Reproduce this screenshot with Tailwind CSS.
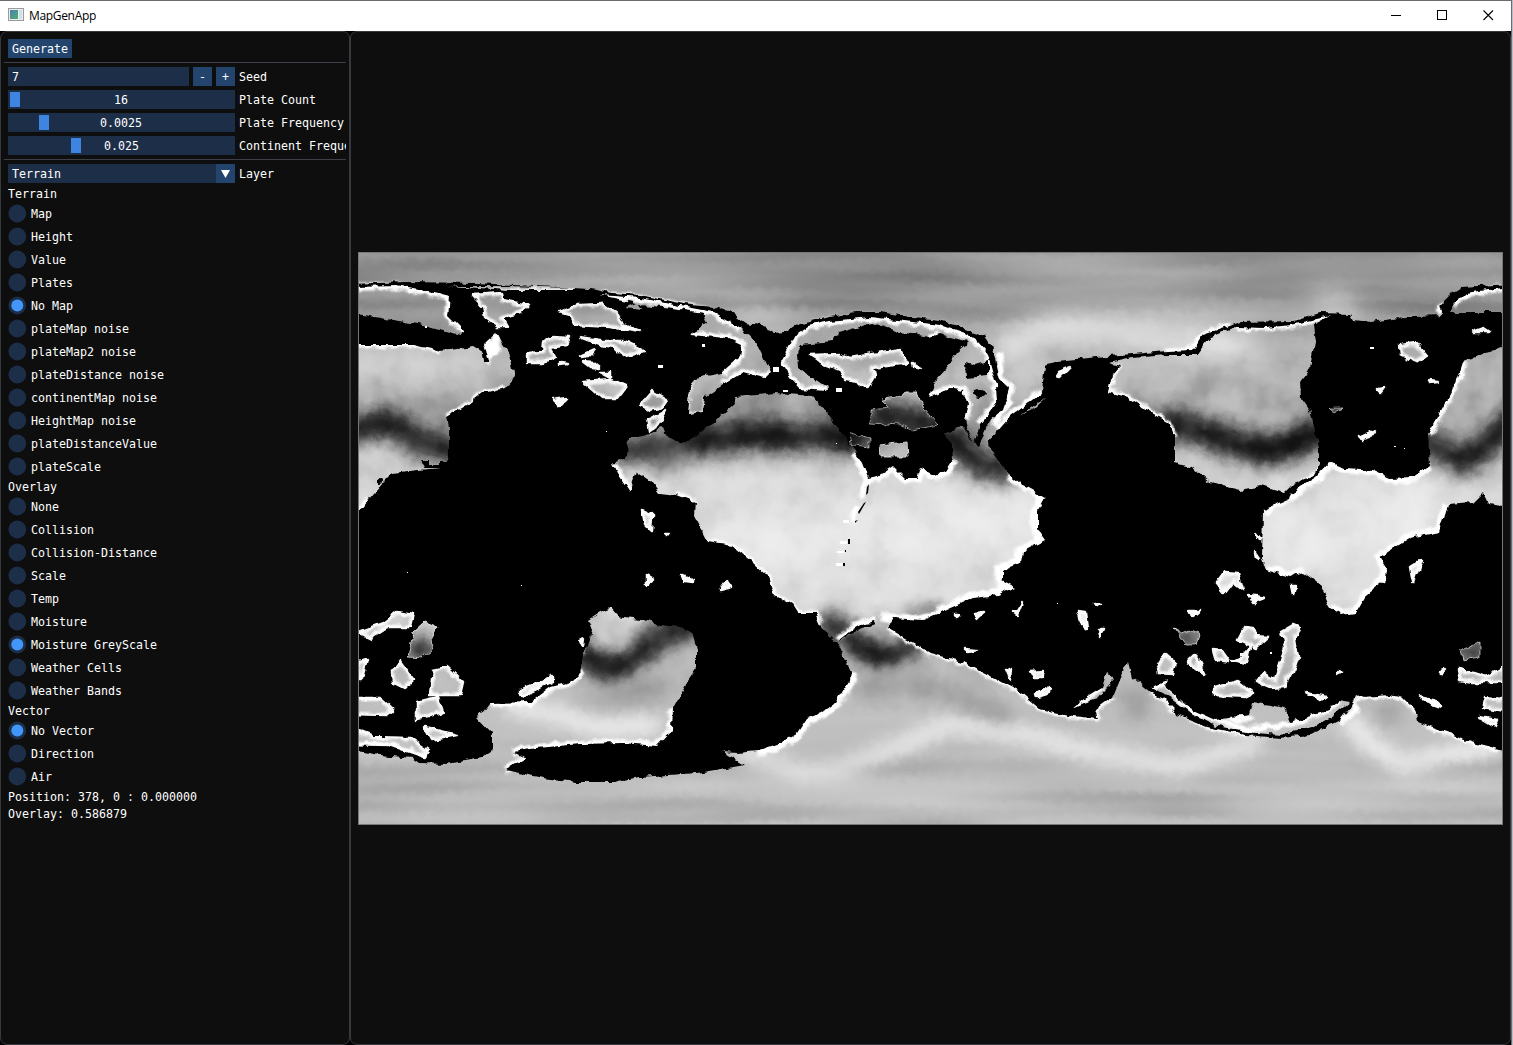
<!DOCTYPE html>
<html lang="en">
<head>
<meta charset="utf-8">
<title>MapGenApp</title>
<script src="https://cdn.jsdelivr.net/npm/@tailwindcss/browser@4"></script>
</head>
<body class="w-[1513px] h-[1045px] overflow-hidden bg-[#b9bcc4] font-['Open_Sans',sans-serif]">
<div class="flex flex-col w-[1512px] h-[1045px] border-t border-r border-[#6b6b6f] bg-black">
  <header class="flex h-[30px] shrink-0 items-center bg-white pb-px pl-2 text-black">
    <svg class="size-4 shrink-0" viewBox="0 0 16 16"><defs><linearGradient id="ico" x2="1" y2="1"><stop stop-color="#4a7fb5"/><stop offset="1" stop-color="#4fb06a"/></linearGradient></defs><rect x=".5" y=".5" width="15" height="12" fill="#eceff1" stroke="#9a9a9a"/><rect x="2" y="2" width="8" height="9" fill="url(#ico)"/><rect x="11" y="2" width="3" height="9" fill="#cfe0e4"/></svg>
    <span class="ml-[5px] pt-px text-[12px] leading-4 tracking-[-0.33px]">MapGenApp</span>
    <div class="ml-auto flex items-center gap-[35px] pr-[17px]">
      <svg class="size-[11px]" viewBox="0 0 11 11" shape-rendering="crispEdges"><path d="M0 5.500H10" stroke="#000"/></svg>
      <svg class="size-[11px]" viewBox="0 0 11 11" shape-rendering="crispEdges"><path d="M.5 .5H9.500V9.500H.5Z" fill="none" stroke="#000"/></svg>
      <svg class="size-[11px]" viewBox="0 0 11 11"><path d="M.5 .5L10 10M10 .5L.5 10" stroke="#000" stroke-width="1.100"/></svg>
    </div>
  </header>
  <main class="flex min-h-0 flex-1 text-[11.63px] leading-[13px] font-['DejaVu_Sans_Mono',monospace] text-white">
    <aside class="flex w-[350px] shrink-0 flex-col gap-1 overflow-hidden rounded-[7px] border border-[#38383f] bg-[#0e0e0e] px-[3px] pt-[7px] whitespace-pre">
      <button class="ml-1 h-[19px] w-16 shrink-0 bg-[#23456d] pt-[2px] text-center">Generate</button>
      <div class="h-px shrink-0 bg-[#3f3f48]"></div>
      <div class="ml-1 flex h-[19px] shrink-0 items-center gap-1 overflow-hidden">
        <div class="flex h-full w-[181px] items-center bg-[#1d2e48] pt-[2px] pl-1">7</div>
        <button class="h-full w-[19px] bg-[#23456d] pt-[2px]">-</button>
        <button class="h-full w-[19px] bg-[#23456d] pt-[2px]">+</button>
        <span class="pt-[2px]">Seed</span>
      </div>
      <div class="ml-1 flex h-[19px] shrink-0 items-center gap-1 overflow-hidden">
        <div class="relative h-full w-[227px] shrink-0 bg-[#1d2e48] pr-px text-center leading-[21px]"><i class="absolute top-[2px] left-[2px] h-[15px] w-[10px] bg-[#3d85e0]"></i>16</div><span class="pt-[2px]">Plate Count</span>
      </div>
      <div class="ml-1 flex h-[19px] shrink-0 items-center gap-1 overflow-hidden">
        <div class="relative h-full w-[227px] shrink-0 bg-[#1d2e48] pr-px text-center leading-[21px]"><i class="absolute top-[2px] left-[31px] h-[15px] w-[10px] bg-[#3d85e0]"></i>0.0025</div><span class="pt-[2px]">Plate Frequency</span>
      </div>
      <div class="ml-1 flex h-[19px] shrink-0 items-center gap-1 overflow-hidden">
        <div class="relative h-full w-[227px] shrink-0 bg-[#1d2e48] text-center leading-[21px]"><i class="absolute top-[2px] left-[63px] h-[15px] w-[10px] bg-[#3d85e0]"></i>0.025</div><span class="pt-[2px]">Continent Frequency</span>
      </div>
      <div class="h-px shrink-0 bg-[#3f3f48]"></div>
      <div class="ml-1 flex h-[19px] shrink-0 items-center gap-1">
        <div class="flex h-full w-[227px] items-center justify-between bg-[#1d2e48] pl-1"><span class="pt-[2px]">Terrain</span><span class="flex size-[19px] items-center justify-center bg-[#23456d]"><svg class="h-2 w-[9px]" viewBox="0 0 9 8"><path d="M0 0H9L4.500 8Z" fill="#fff"/></svg></span></div><span class="pt-[2px]">Layer</span>
      </div>
      <div id="options" class="ml-1 flex flex-col gap-1"></div>
    </aside>
    <section class="flex min-w-0 flex-1 items-center rounded-[7px] border border-[#38383f] bg-[#0e0e0e] pl-[7px]">
<svg class="mt-px h-[573px] w-[1145px] shrink-0 bg-[#777]" viewBox="358 252 1145 573">
<defs>
<filter id="rough" x="0" y="0" width="1" height="1" color-interpolation-filters="sRGB"><feTurbulence type="fractalNoise" baseFrequency=".11" numOctaves="2" seed="7"/><feDisplacementMap in="SourceGraphic" scale="7" xChannelSelector="R" yChannelSelector="G"/></filter>
<filter id="b2" x="-.2" y="-.2" width="1.400" height="1.400"><feGaussianBlur stdDeviation="1.100"/></filter>
<filter id="b8" filterUnits="userSpaceOnUse" x="320" y="220" width="1220" height="640"><feGaussianBlur stdDeviation="8"/></filter>
<filter id="b16" filterUnits="userSpaceOnUse" x="300" y="200" width="1260" height="680"><feGaussianBlur stdDeviation="13"/></filter>
<filter id="cloud" x="0" y="0" width="1" height="1" color-interpolation-filters="sRGB"><feTurbulence type="fractalNoise" baseFrequency=".028" numOctaves="3" seed="3"/><feColorMatrix values="2 0 0 0 -.5 2 0 0 0 -.5 2 0 0 0 -.5 0 0 0 0 1"/></filter>
<filter id="streak" x="0" y="0" width="1" height="1" color-interpolation-filters="sRGB"><feTurbulence type="fractalNoise" baseFrequency=".004 .04" numOctaves="2" seed="5"/><feColorMatrix values="1.600 0 0 0 -.3 1.600 0 0 0 -.3 1.600 0 0 0 -.3 0 0 0 0 1"/></filter>
<linearGradient id="midfade" x2="0" y2="1"><stop offset=".1" stop-color="#000"/><stop offset=".25" stop-color="#fff"/><stop offset=".68" stop-color="#fff"/><stop offset=".82" stop-color="#000"/></linearGradient>
<linearGradient id="polefade" x2="0" y2="1"><stop offset=".1" stop-color="#fff"/><stop offset=".22" stop-color="#000"/><stop offset=".75" stop-color="#000"/><stop offset=".93" stop-color="#fff"/></linearGradient>
<mask id="mid" maskUnits="userSpaceOnUse" x="350" y="245" width="1160" height="590"><rect x="350" y="245" width="1160" height="590" fill="url(#midfade)"/></mask>
<mask id="poles" maskUnits="userSpaceOnUse" x="350" y="245" width="1160" height="590"><rect x="350" y="245" width="1160" height="590" fill="url(#polefade)"/></mask>
<linearGradient id="base" x2="0" y2="1"><stop stop-color="#929292"/><stop offset=".1" stop-color="#9c9c9c"/><stop offset=".22" stop-color="#bcbcbc"/><stop offset=".3" stop-color="#aaa"/><stop offset=".4" stop-color="#d8d8d8"/><stop offset=".6" stop-color="#dedede"/><stop offset=".7" stop-color="#b6b6b6"/><stop offset=".8" stop-color="#c2c2c2"/><stop offset=".9" stop-color="#bababa"/><stop offset="1" stop-color="#c0c0c0"/></linearGradient>
<path id="ocean" d="M350 284L405 282 477 283 535 286 590 289 612 293 640 295 665 300 690 305 716 307 730 312 745 323 762 325 775 333 786 332 800 323 815 320 835 316 862 312 880 312 905 316 940 320 955 325 965 329 985 336 991 345 994 355 998 372 1000 380 1009 388 1006 398 1002 410 990 420 984 435 978 446 973 443 962 425 944 433 952 445 953 460 946 471 935 475 920 468 917 478 905 478 893 466 878 476 868 478 862 463 855 452 848 440 840 430 828 415 820 405 812 396 775 393 736 397 733 405 712 423 705 427 703 432 693 438 680 443 667 437 663 427 652 433 640 437 628 437 627 458 613 463 618 473 630 491 637 472 653 483 660 493 677 495 695 502 694 515 708 542 732 546 750 560 768 577 774 595 792 605 797 613 815 613 820 625 830 637 837 643 851 672 850 680 835 703 823 712 807 718 797 733 783 742 757 751 737 753 722 752 744 765 697 773 640 777 613 782 577 782 543 778 505 770 525 758 513 752 537 748 580 744 623 743 657 746 672 730 673 708 688 680 697 667 697 650 692 633 680 627 660 625 640 619 617 616 610 608 600 612 588 620 592 630 588 647 583 653 582 670 570 682 550 687 530 702 490 703 478 718 492 733 492 750 482 758 447 764 420 763 413 758 380 755 350 750 350 511 360 510 368 500 383 483 393 473 417 470 443 468 449 455 449 427 447 417 467 405 483 393 505 388 515 377 510 355 502 342 497 332 485 343 490 362 484 362 483 353 473 347 440 351 413 345 350 345Z
M993 453L988 445 997 432 1010 417 1042 392 1045 365 1057 361 1087 358 1107 356 1133 354 1167 351 1193 350 1203 335 1230 326 1240 322 1293 321 1320 313 1350 314 1353 320 1370 322 1413 316 1443 315 1440 305 1450 295 1463 287 1510 284 1510 343 1463 362 1458 378 1443 408 1428 435 1430 465 1413 477 1390 478 1373 470 1346 468 1330 462 1316 477 1290 493 1288 500 1263 510 1262 560 1266 570 1290 577 1303 572 1320 585 1330 608 1341 615 1356 613 1368 593 1385 580 1386 567 1380 557 1410 538 1440 532 1448 505 1473 503 1483 493 1488 503 1510 506 1510 750 1500 749 1476 743 1453 735 1430 727 1418 722 1415 710 1403 698 1390 695 1363 697 1356 694 1351 706 1340 720 1310 735 1280 738 1246 735 1207 727 1177 715 1175 710 1163 698 1150 692 1132 677 1128 662 1120 680 1113 697 1095 710 1098 719 1073 716 1040 709 1020 692 963 662 930 653 887 628 893 618 923 620 973 598 997 595 1015 587 1002 580 1002 570 1020 563 1022 552 1045 540 1038 530 1038 510 1045 497 1020 483 1008 473 997 458Z
M838 641L850 631 862 624 874 621 876 624 862 628 850 634 841 640Z"/>
<path id="plates" d="M350 287L397 286 425 291 450 297 448 315 465 332 460 336 423 325 350 313Z M447 286L510 286 572 288 572 290 510 290 480 288Z M640 298L670 304 713 312 740 328 755 342 763 358 770 373 765 378 743 372 723 385 705 397 703 413 688 415 690 388 695 378 722 373 740 357 742 345 727 338 690 335 708 323 703 313 673 308 640 305 643 310 625 308 637 303 600 295Z
M780 362L787 350 795 335 808 326 830 321 870 317 905 321 940 325 965 334 978 342 987 352 992 370 996 385 997 400 990 412 980 425 974 444 966 428 964 420 968 405 963 390 952 388 930 396 936 380 947 368 957 352 968 342 940 334 930 337 900 332 873 323 837 333 833 342 800 345 797 355 798 368 813 378 828 388 826 391 800 389 790 378Z
M1110 363L1133 358 1167 355 1197 355 1210 337 1236 327 1265 328 1290 325 1330 316 1313 325 1315 342 1310 368 1300 382 1301 398 1311 412 1315 432 1319 448 1319 465 1313 476 1293 484 1284 493 1262 486 1240 490 1210 483 1193 468 1175 463 1175 438 1168 422 1143 408 1127 397 1108 392 1112 375 1120 366Z M1510 287L1465 293 1453 305 1449 312 1510 312Z
M1152 687L1167 680 1165 687 1193 710 1215 720 1250 715 1253 702 1285 708 1291 722 1330 710 1338 700 1350 702 1333 716 1313 727 1280 735 1246 732 1213 725 1193 715 1170 697Z M1073 707L1084 698 1102 687 1107 672 1115 678 1097 698 1084 702Z M1020 416L1034 406 1047 397 1034 409Z"/>
<path id="isles" d="M472 295L502 293 503 300 528 305 520 313 502 317 508 327 498 327 485 317 483 307Z M560 312L577 305 603 304 618 315 623 325 640 332 610 327 575 325 570 315Z M543 342L553 337 570 338 567 345 550 348 555 357 543 363 527 363 527 353 542 352Z M580 337L600 340 623 340 645 351 623 357 613 347 600 345Z M583 361L593 362 600 368 591 367Z M580 357L595 350 589 356Z M600 373L609 373 609 378Z M583 382L610 380 627 385 617 398 602 398Z M553 400L567 398 559 406Z M560 362L568 363 560 364Z M640 405L652 391 668 400 663 407 650 410Z M648 420L667 411 658 425 650 431Z
M810 355L840 354 850 358 867 355 900 349 908 363 873 368 875 375 867 388 858 382 845 380 840 370 823 363Z M913 363L922 368 914 366Z M1400 345L1416 343 1426 355 1416 362 1401 355Z M1473 332L1484 328 1490 332Z M1360 437L1375 430 1369 438 1362 440Z M1378 389L1384 388 1381 392Z M1429 381L1438 382 1430 383Z M1058 372L1070 367 1060 377Z
M358 632L383 623 397 612 413 615 410 627 387 627 370 638Z M392 672L400 662 413 680 405 688 393 682Z M433 670L447 667 463 682 460 695 430 695Z M417 702L438 697 443 712 417 719Z M350 698L380 698 393 710 387 715 350 714Z M350 728L373 737 410 738 428 750 425 757 390 745 350 744Z M425 727L457 735 432 740Z M520 690L553 677 553 681 522 696Z M358 662L367 660 362 678 358 678Z M580 640L584 638 583 647Z
M642 510L653 515 652 532 645 525Z M665 533L670 533 667 535Z M647 575L654 579 647 584Z M682 575L693 580 693 583 685 582Z M720 590L727 580 732 587Z M1013 612L1018 611 1023 603 1018 616Z M975 614L983 613 978 617Z M955 614L960 614 957 617Z M966 649L978 650 970 652Z M1078 612L1085 613 1087 628 1082 624Z M1099 630L1104 630 1100 636Z M1095 603L1100 604 1097 606Z M1006 668L1012 670 1011 680Z M1030 672L1043 671 1041 677 1033 677Z M1033 695L1050 686 1049 693 1036 697Z
M1217 583L1225 572 1238 573 1243 590 1233 582 1225 593Z M1250 595L1264 598 1254 602Z M1291 585L1295 585 1293 595Z M1188 611L1200 611 1194 616Z M1156 668L1165 653 1175 662 1172 674 1157 673Z M1187 662L1195 654 1203 670 1205 674Z M1238 640L1245 627 1253 628 1256 636 1268 637 1256 648Z M1233 660L1243 655 1250 647 1246 663Z M1213 650L1222 651 1230 662 1216 660Z M1281 632L1293 625 1300 628 1295 640 1298 657 1293 672 1285 687 1270 688 1256 682 1263 673 1275 680 1281 662 1285 647Z M1215 688L1238 681 1253 693 1245 697 1215 695Z M1306 693L1328 697 1320 700Z M1230 718L1253 717 1238 722Z M1256 533L1261 539 1258 537Z M1255 553L1259 559 1256 557Z
M1410 567L1421 560 1413 583Z M1458 670L1470 672 1486 677 1502 668 1510 682 1473 682 1460 680Z M1486 697L1510 700 1510 713 1483 708Z M1478 717L1498 720 1495 727Z M1420 697L1434 700 1441 707 1430 703Z M1439 671L1445 670 1441 673Z M1338 672L1342 673 1338 675Z"/>
<path id="darkisles" d="M882 400L895 398 907 392 917 392 923 408 938 425 913 430 900 425 870 423 870 410 890 408Z M879 445L907 442 908 457 880 457Z M848 432L870 438 870 448 852 446Z M1328 408L1343 408 1334 413Z M413 633L425 622 437 627 430 640 432 650 423 658 408 657 410 647Z M1173 628L1182 633 1190 630 1200 635 1197 645 1185 645Z M1461 650L1480 642 1480 657 1463 660Z"/>
<mask id="land" maskUnits="userSpaceOnUse" x="350" y="245" width="1160" height="590"><rect x="350" y="245" width="1160" height="590" fill="#fff"/><use href="#ocean"/><use href="#plates" fill="#fff"/><use href="#isles" fill="#fff" stroke="#fff" stroke-width="2.500" stroke-linejoin="round"/><use href="#darkisles" fill="#fff" stroke="#fff"/><path d="M966 362L975 365 988 361V376L967 378Z"/><ellipse cx="980" cy="394" rx="7" ry="4"/><circle cx="379" cy="481" r="3"/><path d="M420 461h10v4h8v-3h8v6h-22Z"/></mask>
<clipPath id="frame"><rect x="359" y="253" width="1143" height="571"/></clipPath>
</defs>
<g clip-path="url(#frame)">
<rect x="358" y="252" width="1145" height="574" fill="#000"/>
<g filter="url(#rough)"><g mask="url(#land)">
<rect x="350" y="245" width="1160" height="590" fill="url(#base)"/>
<g filter="url(#b16)" fill="none" stroke-linecap="round">
<path d="M350 298L450 318" stroke="#8e8e8e" stroke-width="25"/>
<path d="M345 365L480 360" stroke="#d4d4d4" stroke-width="28"/>
<path d="M360 395L490 385" stroke="#aaa" stroke-width="20"/>
<path d="M1010 345L1060 327 1180 340 1240 345" stroke="#e8e8e8" stroke-width="32"/>
<path d="M1320 300L1350 306" stroke="#eee" stroke-width="16"/>
<path d="M740 320L780 322" stroke="#ddd" stroke-width="14"/>
<path d="M690 405L810 405" stroke="#929292" stroke-width="18"/>
<path d="M1130 385L1300 385M1450 385L1500 385" stroke="#ababab" stroke-width="26"/>
<path d="M720 545L1020 520M1290 540L1430 510" stroke="#e8e8e8" stroke-width="60"/>
</g>
<g filter="url(#b8)" fill="none" stroke="#161616" stroke-width="26" stroke-linejoin="round">
<path d="M340 428L375 423 395 427 420 442 470 456"/>
<path d="M610 452L650 446 680 448" stroke="#333"/><path d="M675 448L715 438 740 436 780 435 840 438 870 435" stroke-width="29"/><path d="M650 465L690 452" stroke="#666" stroke-width="18"/>
<path d="M870 415L935 424 965 450 985 468 1015 470"/>
<path d="M1160 422L1200 430 1235 445 1275 450 1325 432" stroke-width="29"/><path d="M1415 438L1440 450 1465 460 1485 446 1520 412"/>
<path d="M575 650L592 658 612 674 638 653 662 633 700 624"/>
<path d="M820 626L840 630 856 646 882 658 905 645 915 632" stroke-width="24"/>
<path d="M910 613L945 611" stroke-width="7"/><path d="M1175 638H1200M410 650H435M1455 652H1487M1325 410H1345" stroke-width="16"/>
</g>
<g filter="url(#b8)" fill="none" stroke="#eee" stroke-width="19" stroke-linecap="round">
<path d="M510 705L560 716 600 728 650 726" stroke="#ebebeb"/><path d="M600 630L625 640" stroke="#d2d2d2"/>
<path d="M745 755L800 770 840 768 900 747 950 723 1030 735 1090 752 1180 766 1225 752 1255 742" stroke="#e6e6e6"/><path d="M1350 722L1375 748 1405 766 1440 756 1490 748"/>
<path d="M890 635H893" stroke="#bbb"/>
</g>
<g filter="url(#b8)" fill="none" stroke="#a2a2a2" stroke-width="22"><path d="M860 685L930 685 1010 715M1130 680L1140 720M1380 710L1400 715M590 697L665 685"/></g>
<g mask="url(#mid)" class="mix-blend-soft-light"><rect x="350" y="245" width="1160" height="590" filter="url(#cloud)" opacity=".4"/></g>
<g mask="url(#poles)" class="mix-blend-soft-light"><rect x="350" y="245" width="1160" height="590" filter="url(#streak)" opacity=".5"/></g>
<use href="#isles" fill="none" stroke="#fff" stroke-width="4.500" stroke-opacity=".95" filter="url(#b2)"/>
<use href="#darkisles" fill="none" stroke="#fff" stroke-width="1" stroke-opacity=".5"/>
<g fill="none" stroke="#fff" stroke-width="8" stroke-linejoin="round" filter="url(#b2)">
<path d="M350 287L397 286 425 291 450 297 448 315 465 332 485 340 492 350 486 362M497 334L494 355" /><path d="M350 345L413 345 440 351" stroke-width="5"/><path d="M447 417L467 405 483 393 505 388" stroke-width="5"/>
<path d="M600 295L640 298 670 304 713 312 740 328M690 335L727 338 742 345 740 357 722 373M770 373L765 378 743 372 723 385"/><path d="M455 290H575" stroke-width="3"/>
<path d="M705 397L703 413 688 415 690 388 695 378" stroke-width="2"/>
<path d="M930 337L940 334M930 396L952 388 963 390 968 405 964 420M826 391L800 389 790 378 780 362 787 350 795 335 808 326 830 321 870 317 905 321 940 325 965 334 978 342 987 352 992 370 996 385 997 400 980 425"/>
<path d="M1000 352L1001 378 1010 388 1007 405 992 425M1042 391L1010 416 997 430" stroke-width="7"/><path d="M1165 350L1191 349 1201 335 1230 325" stroke-width="5"/>
<path d="M1236 327L1265 328 1290 325 1330 316M1120 366L1112 375 1108 392 1127 397 1143 408 1168 422 1175 438" stroke-width="6"/>
<path d="M1510 287L1465 293 1453 305M1440 303L1442 314M1463 362L1458 378 1443 408 1428 435"/>
<path d="M1430 465L1413 477 1390 478 1373 470 1346 468 1330 462 1316 477 1290 495 1263 510M1266 570L1290 577 1303 572M1330 608L1341 615 1356 613 1368 593 1385 580 1386 567 1380 557 1410 538 1440 532 1448 505" stroke-width="11"/>
<path d="M953 460L946 471 935 475 920 468 917 478 905 478 893 466 878 476 868 478 862 463 855 452" stroke-width="10"/><path d="M866 482L861 498M857 506L852 522" stroke-width="6"/>
<path d="M1008 473L1045 494 1038 510 1038 530 1045 540 1022 552 1020 563 1002 570 1002 580 1012 585 997 595 973 598 940 613" stroke-width="13"/><path d="M940 613L923 620 893 618 882 615" stroke-width="9"/>
<path d="M708 542L732 546 750 560 768 577 774 595 792 605 797 613 815 613 820 625" stroke-width="5"/>
<path d="M851 672L850 680 835 703 823 712 807 718 797 733 783 742 757 751" stroke-width="12"/>
<path d="M887 628L930 653 963 662 1020 692 1040 709 1073 716 1098 719 1095 710 1113 697" stroke-width="5"/><path d="M1150 692L1163 698 1175 710 1207 727 1246 735"  stroke-width="5"/>
<path d="M838 638L850 630 862 622 876 619M695 502L677 495M613 463L630 491M368 500L360 508" stroke-width="6"/>
<path d="M490 703L530 702 550 687 570 682 582 670M513 752L537 748 580 744 623 743 657 746 672 730 673 708M505 770L525 758" stroke-width="8"/>
<path d="M1152 687L1165 684 1193 712 1246 730 1291 724 1330 710 1338 700M1073 707L1102 687M1340 722L1356 710 1348 688M1356 697L1390 695 1403 698 1415 710 1430 727 1476 743 1500 749" stroke-width="6"/>
<path d="M350 744L390 745 425 757M350 698H380" stroke-width="5"/>
</g>
</g></g>
<path fill="#fff" shape-rendering="crispEdges" d="M407 572h1v1h-1zM521 585h1v1h-1zM606 431h1v1h-1zM425 326h2v2h-2zM702 344h3v3h-3zM1057 603h1v1h-1zM1394 446h2v1h-2zM1404 448h1v1h-1zM658 365h5v3h-5zM836 443h1v1h-1zM773 367h6v5h-6zM843 520h6v3h-6zM840 541h7v3h-7zM837 551h7v2h-7zM836 563h7v3h-7zM1370 347h4v2h-4zM1240 653h3v3h-3zM1270 652h2v2h-2zM836 388h6v4h-6zM783 390h5v2h-5z"/>
<path fill="#000" d="M848 539h2v5h-2zM845 550h1v2h-1zM843 563h2v3h-2zM869 484l-1 9-2 2 1-8zM866 502l-7 12-1-2 6-9zM858 520l-3 3v-2zM846 432h4v9h-2zM857 450h4v3h-3z"/>
</g></svg>
    </section>
  </main>
</div>
<script>
const groups = [
  ['Terrain', ['Map','Height','Value','Plates','No Map','plateMap noise','plateMap2 noise','plateDistance noise','continentMap noise','HeightMap noise','plateDistanceValue','plateScale'], 4],
  ['Overlay', ['None','Collision','Collision-Distance','Scale','Temp','Moisture','Moisture GreyScale','Weather Cells','Weather Bands'], 6],
  ['Vector', ['No Vector','Direction','Air'], 0]
];
let html = '';
for (const [title, items, selected] of groups) {
  html += `<div class="h-[13px] pt-px">${title}</div>`;
  items.forEach((label, i) => {
    html += `<label class="flex h-[19px] items-center gap-1"><svg class="size-[19px]" viewBox="0 0 19 19"><circle cx="9.300" cy="9.500" r="8.900" fill="#1d2e48"/>${i === selected ? '<circle cx="9.300" cy="9.500" r="6" fill="#4296fa"/>' : ''}</svg><span class="pt-[2px]">${label}</span></label>`;
  });
}
html += '<div class="h-[13px] pt-px">Position: 378, 0 : 0.000000</div><div class="h-[13px] pt-px">Overlay: 0.586879</div>';
document.getElementById('options').innerHTML = html;
</script>
</body>
</html>
